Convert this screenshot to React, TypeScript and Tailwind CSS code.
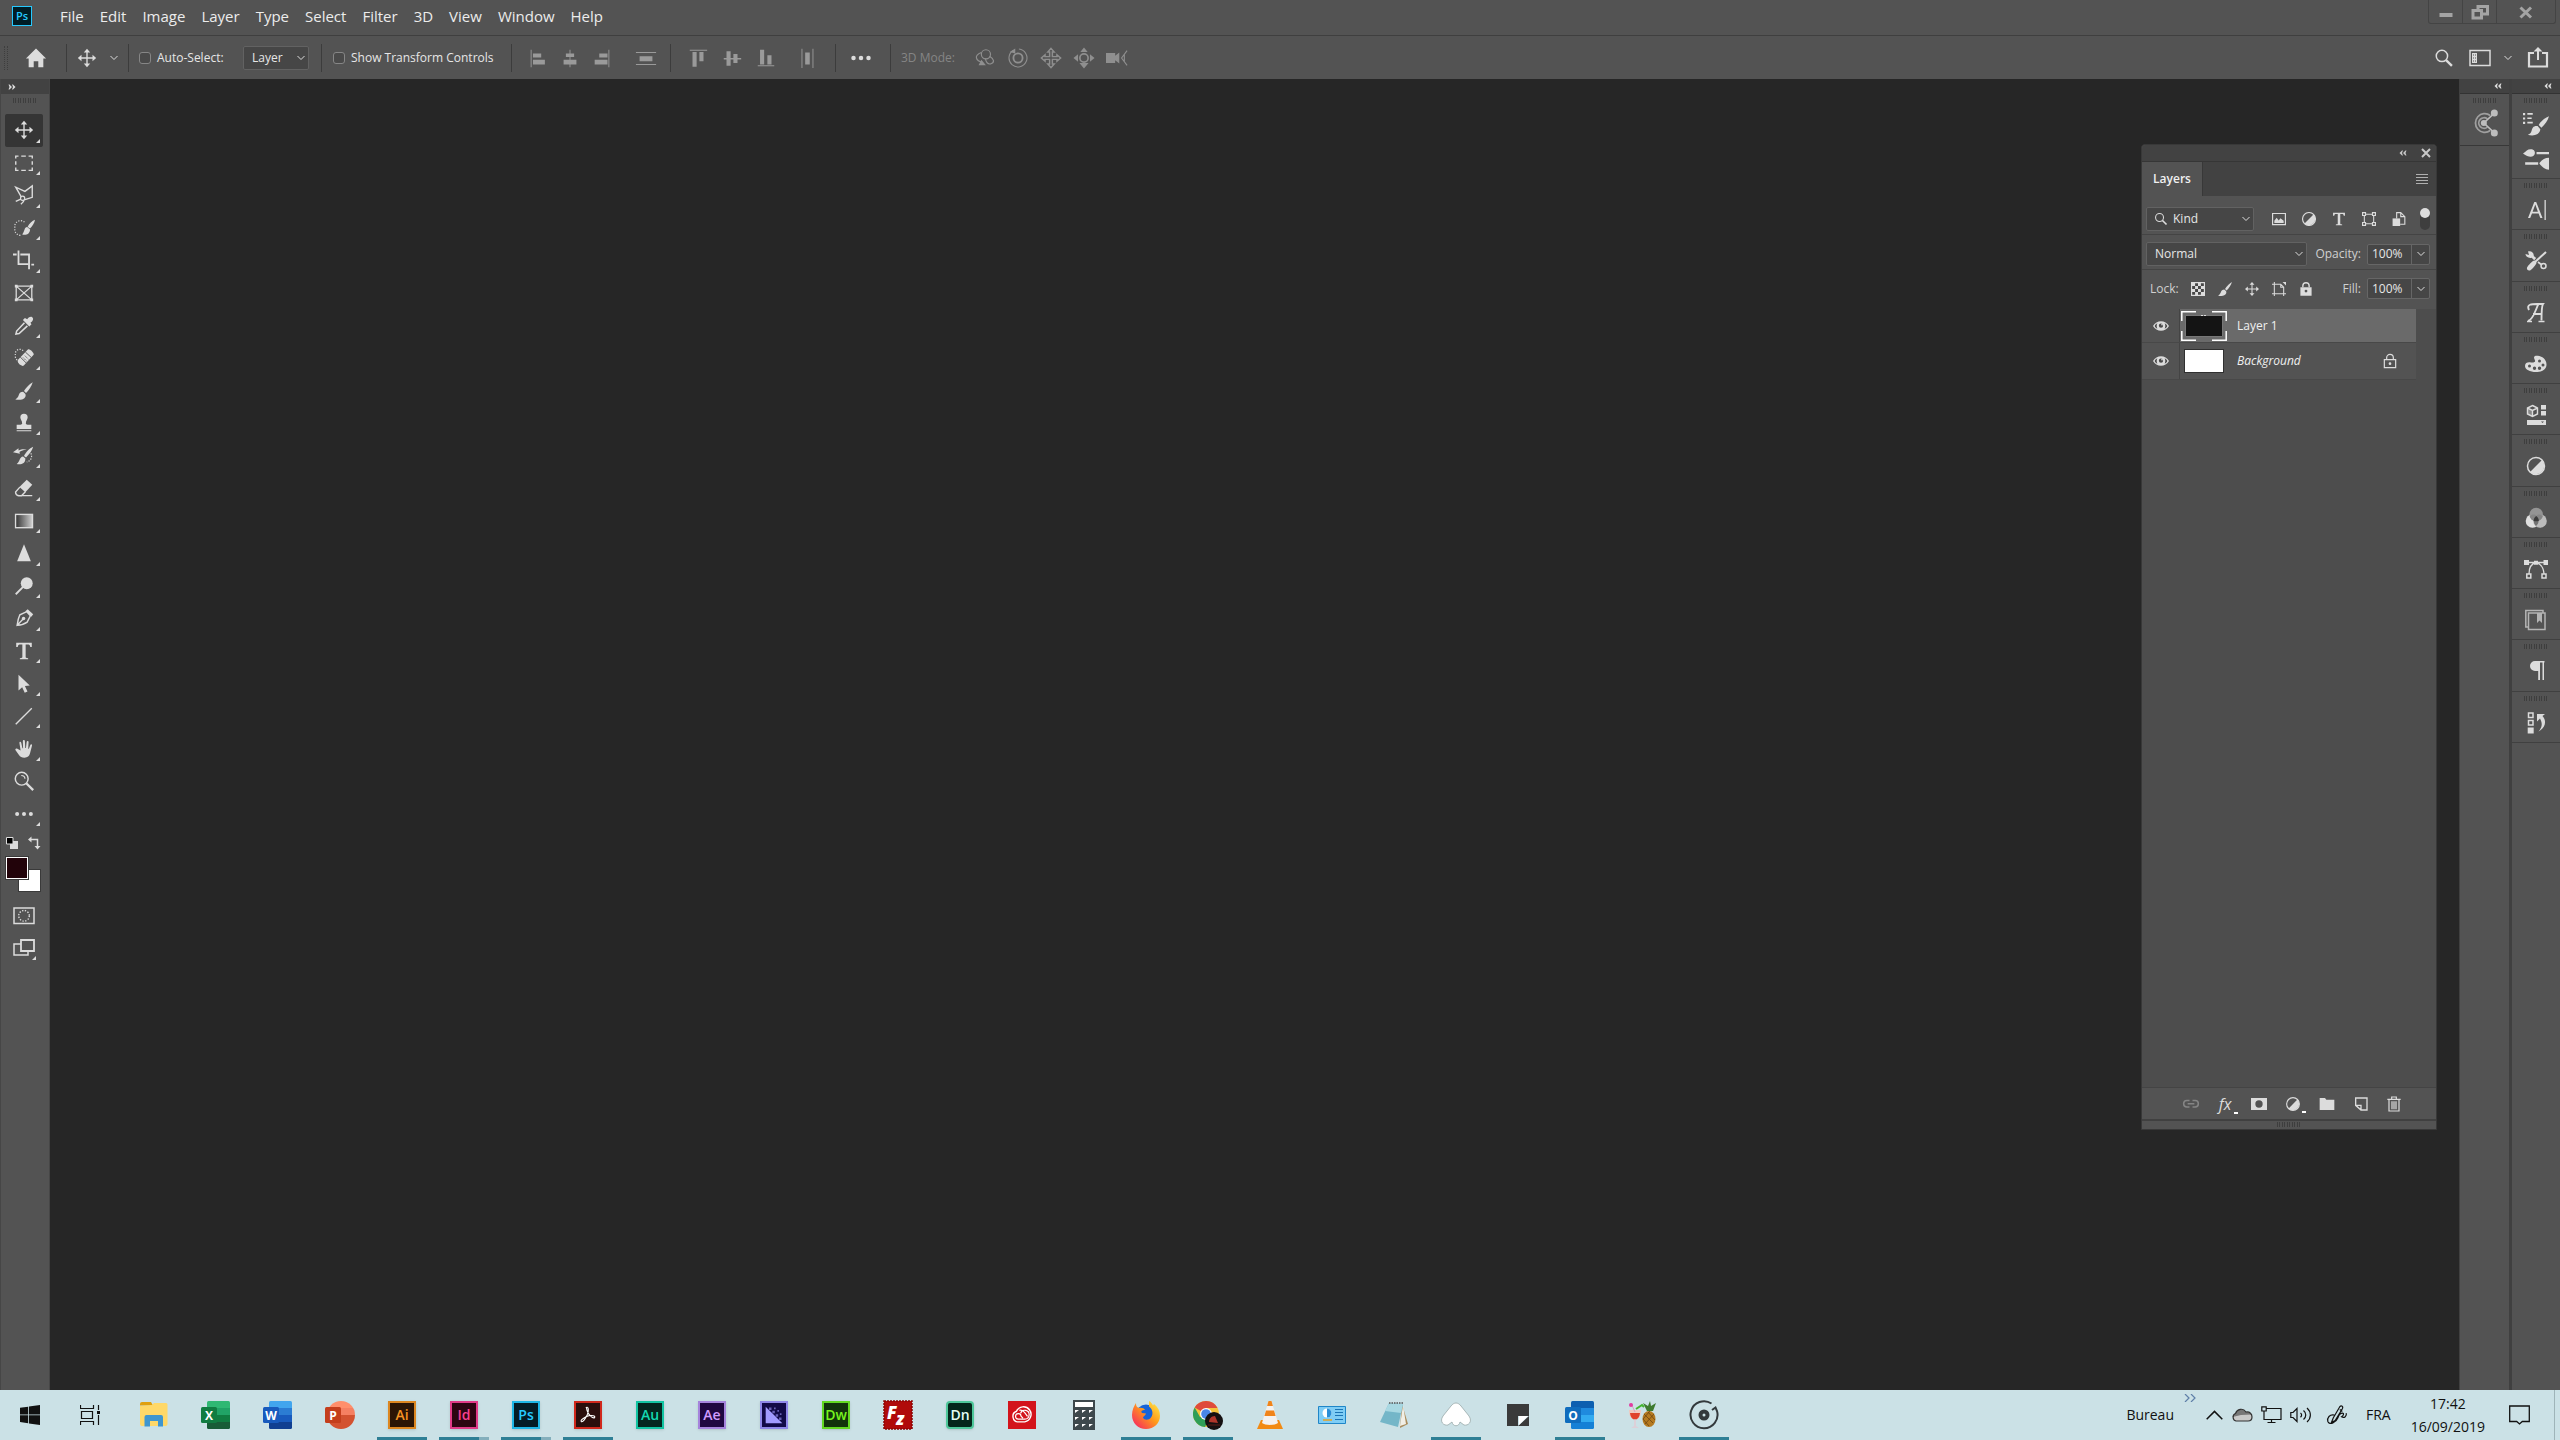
import type { ReactNode } from "react";

interface IconProps {
  children: ReactNode;
  size?: string;
  box?: string;
}

/** Filled + stroked glyph on a 24px grid. */
function Icon({ children, size = "size-6", box = "0 0 24 24" }: IconProps) {
  return (
    <svg viewBox={box} className={`${size} shrink-0`} fill="currentColor" aria-hidden="true">
      {children}
    </svg>
  );
}

/** Outline-only path. */
function Line({ d, w = 1.5 }: { d: string; w?: number }) {
  return <path d={d} fill="none" stroke="currentColor" strokeWidth={w} />;
}

const moveIcon = (
  <>
    <Line d="M12 4v16M4 12h16" />
    <path d="M12 2l3.500 4h-7zM12 22l3.500-4h-7zM2 12l4-3.500v7zM22 12l-4-3.500v7z" />
  </>
);

const brushIcon = (
  <>
    <path d="M21.500 2.500c-3 1.500-7.500 6-9.500 9.500l2.200 2.200c3-3 6.300-7.700 7.300-11.700z" />
    <path d="M11 12.800c-2.500 0-4 1.200-4.600 3.400-.6 2.200-1.900 3.800-3.900 5 4.500 1 9.500.3 11-3 .5-1.300.3-2.600-.2-3.300z" />
  </>
);

const magnifier = (
  <>
    <circle cx="9.500" cy="9.500" r="6.800" fill="none" stroke="currentColor" strokeWidth="1.800" />
    <Line d="M14.500 14.500l7 7" w={2.8} />
  </>
);

const halfCircle = (
  <>
    <circle cx="12" cy="12" r="8.500" fill="none" stroke="currentColor" strokeWidth="1.500" />
    <path d="M18.200 5.800a8.800 8.800 0 0 1-12.400 12.400z" />
  </>
);

const padlock = (
  <>
    <Line d="M7.500 10V8a4.500 4.500 0 0 1 9 0v2" w={2} />
    <path fillRule="evenodd" d="M4 10h16v12H4zM12 13.500a2 2 0 1 0 0 4 2 2 0 0 0 0-4z" />
  </>
);

const typeIcon = (
  <path d="M3.500 3h17v4.500h-1.700C18.500 5.300 18 4.800 15.500 4.800h-1.700v13.700c0 .9.500 1.200 2.700 1.300V21h-9v-1.200c2.200-.1 2.700-.4 2.700-1.300V4.800H8.500C6 4.800 5.500 5.300 5.200 7.500H3.500z" />
);

const tools: { name: string; icon: ReactNode; flyout?: boolean }[] = [
  { name: "Move Tool", icon: moveIcon, flyout: true },
  {
    name: "Rectangular Marquee Tool",
    flyout: true,
    icon: <Line d="M3 7V4.500h3M9 4.500h5M17 4.500h4V7M21 10v4M21 17v3h-4M14 20H9M6 20H3v-3M3 14v-4" />,
  },
  {
    name: "Polygonal Lasso Tool",
    flyout: true,
    icon: (
      <>
        <Line d="M9 14L3 3.500l10 4.500 8-6v12.500L13 17" />
        <circle cx="10.500" cy="15.500" r="2.300" fill="none" stroke="currentColor" strokeWidth="1.300" />
        <Line d="M8.500 16.500L3 19M12 17.500c0 2-1.500 3-3.500 4.500" />
      </>
    ),
  },
  {
    name: "Quick Selection Tool",
    flyout: true,
    icon: (
      <>
        <path d="M12.500 5.500A6.500 6.500 0 0 0 2 9v5c0 4 3.500 6 7 6" fill="none" stroke="currentColor" strokeWidth="1.300" strokeDasharray="1.300 1.600" />
        <path d="M24 3c-3 1-6.500 4.500-8 7.500l2.500 2c2.500-2.300 5-6 5.500-9.500zM15.500 11c-3.500 0-2.500 5-5.500 8 4 .7 8 .3 8.700-5.500z" />
      </>
    ),
  },
  {
    name: "Crop Tool",
    flyout: true,
    icon: (
      <>
        <Line d="M6 1.500v15h11M20 17h3" w={2} />
        <Line d="M0 6h4M8 6h9.500v16" w={2} />
      </>
    ),
  },
  {
    name: "Frame Tool",
    icon: (
      <>
        <Line d="M3.500 4.500h17v15h-17zM3.500 4.500l17 15M20.500 4.500l-17 15" w={1.4} />
        <path d="M2 3h3v3H2zM19 3h3v3h-3zM2 18h3v3H2zM19 18h3v3h-3z" />
      </>
    ),
  },
  {
    name: "Eyedropper Tool",
    flyout: true,
    icon: (
      <>
        <path d="M15.500 4.500c2.500-3.500 5.200-3 6-1.500.9 1.500.5 3.500-2.500 5.500l1.200 1.700-2.400 2.300-7-7 2.200-2.300z" />
        <Line d="M12.500 8.500l-8.500 9-.8 3.300 3.500-.5 9-8.500" w={1.7} />
      </>
    ),
  },
  {
    name: "Spot Healing Brush Tool",
    flyout: true,
    icon: (
      <>
        <path d="M11 4A5 5 0 0 0 2.500 7v3c0 2.500 1.500 4 3 4.500" fill="none" stroke="currentColor" strokeWidth="1.300" strokeDasharray="1.300 1.600" />
        <path d="M16.500 2.500c1.500-1.200 7 4 6 6L12 20c-2.500 2.500-8.500-3.500-6.500-6z" />
        <path d="M13.500 5.500l6.500 6M8 11l6.500 6.500" fill="none" stroke="#535353" />
        <path d="M13 9.500l4 4M11 11.500l4 4" fill="none" stroke="#535353" strokeDasharray="1.500 1" />
      </>
    ),
  },
  { name: "Brush Tool", icon: brushIcon, flyout: true },
  {
    name: "Clone Stamp Tool",
    flyout: true,
    icon: <path d="M12 2a4 4 0 0 1 4 4c0 2-2 3.500-2 6.500 0 1 1 1.500 6 1.500v4.500H4V14c5 0 6-.5 6-1.500C10 9.500 8 8 8 6a4 4 0 0 1 4-4zM4 19.800h16V21H4z" />,
  },
  {
    name: "History Brush Tool",
    flyout: true,
    icon: (
      <>
        <path d="M22 2c-4 1.500-8 6-10 10l2.200 1.600C18 10 21 6 22 2zM11 12.500c-4 .5-3 5-7 8.300 5 .8 9.500-.3 9.500-6z" />
        <path d="M0 8l6-4.500V6c4-2 7-1.500 9-.5-3-.3-5 .3-8 2l.5 2z" />
        <path d="M19.500 9c2 4 0 8.500-4.500 9.500" fill="none" stroke="currentColor" strokeWidth="1.300" strokeDasharray="1.400 1.500" />
      </>
    ),
  },
  {
    name: "Eraser Tool",
    flyout: true,
    icon: (
      <>
        <path d="M15 3l6 5.500-7.500 8L7 11z" />
        <Line d="M7.500 11l-4.700 5.500c0 2 1.500 3.500 3.500 4h3L13.500 16M9 20.300h12" />
      </>
    ),
  },
  {
    name: "Gradient Tool",
    flyout: true,
    icon: (
      <>
        <defs>
          <linearGradient id="tool-gradient">
            <stop offset="0" stopColor="#333" />
            <stop offset="1" stopColor="#d0d0d0" />
          </linearGradient>
        </defs>
        <rect x="2.800" y="4.800" width="18.500" height="14.500" fill="url(#tool-gradient)" stroke="currentColor" strokeWidth="1.500" />
      </>
    ),
  },
  { name: "Sharpen Tool", icon: <path d="M12 2.500L19.500 21h-15z" />, flyout: true },
  {
    name: "Dodge Tool",
    flyout: true,
    icon: (
      <>
        <circle cx="15" cy="9" r="6.500" />
        <Line d="M11 13l-8 8" w={2} />
      </>
    ),
  },
  {
    name: "Pen Tool",
    flyout: true,
    icon: (
      <>
        <Line d="M15 5l-7.500 3.500c-1.500 3-2.500 7.500-3 11.500 4-.3 8-1.300 11-3.500L19 9.500zM5 19.500l6-6.500" w={1.6} />
        <circle cx="11.500" cy="12.500" r="1.900" />
        <path d="M16 2.500l6 5.500-2 2.500-6.500-6z" />
      </>
    ),
  },
  { name: "Horizontal Type Tool", icon: typeIcon, flyout: true },
  { name: "Path Selection Tool", icon: <path d="M6 2v17l4-3.500 2.800 6 3-1.300-2.800-6 5.300-.5z" />, flyout: true },
  { name: "Line Tool", icon: <Line d="M3 21L20.500 3.500" />, flyout: true },
  {
    name: "Hand Tool",
    flyout: true,
    icon: (
      <path d="M8.300 13.500L7 5.500c-.2-1.800 1.700-2 2-.4l1.300 6h.7l-.3-7.600c0-1.700 2.200-1.700 2.300 0l.4 7.500h.7l.8-6.700c.3-1.600 2.200-1.300 2.100.3l-.4 7 .7.200 1.500-4c.6-1.500 2.300-.9 1.900.7l-2.200 8.500c-.8 3-2.500 4.500-6 4.500-3 0-4.600-1-6-3l-3.700-5.200c-.8-1.300.7-2.600 2-1.500z" />
    ),
  },
  {
    name: "Zoom Tool",
    icon: (
      <>
        <circle cx="9.500" cy="9.500" r="7" fill="none" stroke="currentColor" strokeWidth="1.600" />
        <Line d="M9 6c2.500 0 4 1.500 4 3.500" w={1.3} />
        <Line d="M14.500 14.500l7.500 7.500" w={2.5} />
      </>
    ),
  },
  {
    name: "Edit Toolbar",
    flyout: true,
    icon: (
      <>
        <circle cx="4.500" cy="12" r="2.200" />
        <circle cx="12" cy="12" r="2.200" />
        <circle cx="19.500" cy="12" r="2.200" />
      </>
    ),
  },
];

const alignGroups: { name: string; icon: ReactNode; at: string }[][] = [
  [
    { name: "Align left edges", at: "w-8", icon: <path d="M4 3h1v19H4zM6.500 7h9v4.500h-9zM6.500 14h13v5h-13z" /> },
    { name: "Align horizontal centers", at: "w-8", icon: <path d="M11.500 3h1v19h-1zM7.500 7h9v4h-9zM5 14h14v5H5z" /> },
    { name: "Align right edges", at: "w-8", icon: <path d="M19 3h1v19h-1zM9 7h9v4.500H9zM4 14h14v5H4z" /> },
    { name: "Distribute vertically", at: "mr-2 ml-3 w-8", icon: <path d="M1 5.500h22v1H1zM1 18.500h22v1H1zM5 10h14v5.500H5z" /> },
  ],
  [
    { name: "Align top edges", at: "w-[34px]", icon: <path d="M3 3h19v1H3zM6 5.500h4.500v16H6zM13.500 5.500H18v10h-4.500z" /> },
    { name: "Align vertical centers", at: "w-[34px]", icon: <path d="M3 12h19v1.500H3zM6 4.500h4.500v16H6zM13.500 7.500H18v10h-4.500z" /> },
    { name: "Align bottom edges", at: "w-[34px]", icon: <path d="M3 20h18v1H3zM5.500 3H10v16H5.500zM13.500 9H18v10h-4.500z" /> },
    { name: "Distribute horizontally", at: "mr-3 ml-2 w-8", icon: <path d="M6 2h1v21H6zM18 2h1v21h-1zM10 6h5v13h-5z" /> },
  ],
];

const modeIcons: { name: string; icon: ReactNode }[] = [
  {
    name: "Orbit the 3D Camera",
    icon: (
      <>
        <circle cx="13" cy="8" r="5" fill="none" stroke="currentColor" strokeWidth="1.300" />
        <Line d="M8 6c-8 3-7 9 2 11M17 10c5 3 6 7 1 8.500-3 .5-5-2-5.500-6" w={1.3} />
        <path d="M5 20l8 0-5-6z" />
      </>
    ),
  },
  {
    name: "Roll the 3D Camera",
    icon: (
      <>
        <circle cx="12" cy="12" r="5" fill="none" stroke="currentColor" strokeWidth="2" />
        <Line d="M7 3.500a9.800 9.800 0 1 0 6-1.300" w={1.2} />
        <path d="M3 5.500l6-4v5.500z" />
      </>
    ),
  },
  {
    name: "Pan the 3D Camera",
    icon: <Line d="M12 1.500l3.500 4h-2v5h5v-2l4 3.500-4 3.500v-2h-5v5h2l-3.500 4-3.500-4h2v-5h-5v2L1.500 12l4-3.500v2h5v-5h-2z" w={1.6} />,
  },
  {
    name: "Slide the 3D Camera",
    icon: (
      <>
        <circle cx="12" cy="12" r="4.500" fill="none" stroke="currentColor" strokeWidth="1.800" />
        <path d="M12 .5l4 5H8zM12 23.500l5-6H7zM.5 12l5-4v8zM23.500 12l-5-4v8z" />
      </>
    ),
  },
  {
    name: "Zoom the 3D Camera",
    icon: (
      <>
        <path d="M0 6.500h10v3L14.500 6v12L10 14.500v3H0z" />
        <Line d="M23 4l-6 8 6 8M20 8.500v7" w={1.2} />
      </>
    ),
  },
];

const dockGroups: { name: string; icon: ReactNode }[] = [
  {
    name: "Character",
    icon: (
      <>
        <path d="M4 20L10.300 4h1.900L18.500 20h-2.200l-1.700-4.500H8L6.200 20zM8.600 13.700h5.300L11.300 6.500z" />
        <path d="M20.500 2h1.300v20h-1.300z" />
      </>
    ),
  },
  {
    name: "Tool Presets",
    icon: (
      <>
        <path d="M4 2.500c3-1 6 1 5.800 4.500l2.400 2-2 2.200-2.500-2.500C4.500 9.500 1.500 7.500 1.500 5l3.500 1z" />
        <Line d="M22 3L11 13" w={2} />
        <path d="M10.500 11.500l2 2c0 2-5 7.500-6.500 8-2 .5-3.500-1-3-3 1-2 5.500-7 7.500-7z" />
        <Line d="M14 13l4 3" w={1.7} />
        <circle cx="19.500" cy="17" r="2.500" fill="none" stroke="currentColor" strokeWidth="1.500" />
      </>
    ),
  },
  {
    name: "Glyphs",
    icon: (
      <>
        <Line d="M5 9C2 3 8 3 13 3h6c-1.500 2-1.500 9-1.500 16.500M14.500 3C12 7 9.500 19 4 20M9 13h8.500" w={1.9} />
        <Line d="M3 20.500h5M14.500 20.500h6" />
      </>
    ),
  },
  {
    name: "Color",
    icon: (
      <path
        fillRule="evenodd"
        d="M11 4c3.500-1 11.500 1.500 11.500 8.500C22.500 18 17 20 12 20 6 20 1 17.500 1 14c0-3.500 3-4 6-3.500 3 .3 4.500-.5 4-2-.4-1.500-2-3.500 0-4.500zM15.500 7.500a1.500 1.500 0 1 0 0 3 1.500 1.500 0 0 0 0-3zM19 11.500a1.500 1.500 0 1 0 0 3 1.500 1.500 0 0 0 0-3zM15.500 14.500a1.700 1.700 0 1 0 0 3.400 1.700 1.700 0 0 0 0-3.400zM10.500 14.500a1.700 1.700 0 1 0 0 3.400 1.700 1.700 0 0 0 0-3.400zM5.500 12.500a1.500 1.500 0 1 0 0 3 1.500 1.500 0 0 0 0-3z"
      />
    ),
  },
  {
    name: "Libraries",
    icon: (
      <>
        <Line d="M8.500 2.500L13.500 5v6l-5 2.500-5-2.500V5zM3.500 5l5 2.500 5-2.500M8.500 7.500v6" w={1.4} />
        <path opacity=".4" d="M3.500 5l5 2.500v6l-5-2.500z" />
        <path d="M17 2h5v4.500h-5zM17 8h5v4.500h-5z" />
        <path fillRule="evenodd" d="M3 17h19v5H3zM17 18.500l1.500 1.500L20 18.500z" />
      </>
    ),
  },
  { name: "Adjustments", icon: halfCircle },
  {
    name: "Channels",
    icon: (
      <>
        <circle cx="8.500" cy="15" r="6.800" fill="#e0e0e0" />
        <circle cx="16" cy="15" r="6.800" fill="#bcbcbc" />
        <circle cx="12.200" cy="8.500" r="6.800" fill="#949494" />
        <path d="M5.800 10.500c2-2.500 5-2.500 6.500-.5 1.500-2 4.500-2 6.400.5-1 3-3.500 4.500-6.400 4.800-3-.3-5.500-1.800-6.500-4.800z" fill="#858585" />
        <path d="M12.200 10c3 2 3.500 7-.2 10-3.300-3-2.800-8 .2-10z" fill="#727272" />
        <path d="M12.200 10c1.500 1 2.500 3 2.700 4.800-1.700.7-3.700.7-5.400 0 .2-1.800 1.200-3.800 2.700-4.800z" fill="#3c3c3c" />
      </>
    ),
  },
  {
    name: "Paths",
    icon: (
      <>
        <Line d="M1 5.500h22M5 17c0-7 3-10.500 7-11.500 4 1 7.500 4.500 8 11.500" w={1.3} />
        <path d="M0 3h5v5H0zM19.500 3h5v5h-5zM10 3.800h4v4h-4z" />
        <Line d="M2.800 17h4v4h-4zM18 17h4v4h-4z" />
      </>
    ),
  },
  {
    name: "Character Styles",
    icon: (
      <g className="text-[#b4b4b4]">
        <Line d="M4.500 19H1.800V2.500H19V5" />
        <Line d="M4.500 5H21v16.500H4.500z" />
        <path d="M13 5h5v10l-2.500-2.500L13 15z" />
      </g>
    ),
  },
  { name: "Paragraph", icon: <path d="M11 2h9.500v1.500H20V21h-1.500V3.500H16V21h-1.800v-9H11a5 5 0 0 1 0-10z" /> },
  {
    name: "History",
    icon: (
      <>
        <Line d="M4.500 2h4.500v4.500H4.500zM4.500 9.500h4.500v4.500H4.500z" />
        <path d="M3.700 16.500h6v6h-6zM13 3h8l-2.500 2c4.500 5 3 11.500-4 15.500 4-4.500 4-8.500 1.500-13L13 10.500z" />
      </>
    ),
  },
];

function Chevron() {
  return (
    <svg viewBox="0 0 8 6" className="h-[6px] w-2 shrink-0" fill="none" stroke="currentColor" aria-hidden="true">
      <path d="M.5 1l3.500 3.500L7.500 1" />
    </svg>
  );
}

function DoubleArrow({ right }: { right?: boolean }) {
  return (
    <svg viewBox="0 0 8 6" className="h-[6px] w-2 shrink-0" fill="currentColor" aria-hidden="true">
      <path d={right ? "M.5.5h1L4 3 1.500 5.500h-1L1.500 3zM4 .5h1L7.500 3 5 5.500H4L5 3z" : "M4 .5H3L.5 3 3 5.500h1L3 3zM7.500.5h-1L4 3l2.500 2.500h1L6.500 3z"} />
    </svg>
  );
}

function Grip() {
  return (
    <svg viewBox="0 0 24 5" className="h-[5px] w-6 shrink-0" stroke="#3e3e3e" aria-hidden="true">
      <path d="M.5 0v5M2.500 0v5M5.500 0v5M7.500 0v5M10.500 0v5M12.500 0v5M15.500 0v5M17.500 0v5M20.500 0v5M22.500 0v5" />
    </svg>
  );
}

function Separator() {
  return <div className="h-7 w-px shrink-0 bg-[#3c3c3c]" />;
}

interface PickerProps {
  label: string;
  value: string;
  width: string;
  pad?: string;
  children?: ReactNode;
}

function Picker({ label, value, width, pad = "pl-2", children }: PickerProps) {
  return (
    <div className={`relative ${width} shrink-0`}>
      {children && <span className="pointer-events-none absolute inset-y-0 left-2 flex items-center">{children}</span>}
      <select
        aria-label={label}
        className={`block h-6 w-full appearance-none rounded-[2px] border border-[#626262] bg-[#464646] text-[12px] leading-4 text-[#e6e6e6] ${pad}`}
      >
        <option>{value}</option>
      </select>
      <span className="pointer-events-none absolute inset-y-0 right-1 flex items-center">
        <Chevron />
      </span>
    </div>
  );
}

function MenuBar() {
  const menus = ["File", "Edit", "Image", "Layer", "Type", "Select", "Filter", "3D", "View", "Window", "Help"];
  return (
    <header className="flex h-9 items-start justify-between border-b border-[#3f3f3f] bg-[#535353]">
      <div className="flex items-center pl-3">
        <span className="mt-1.5 mr-7 flex h-5 w-5 items-center justify-center border border-[#26c9ff] bg-[#001d26] text-[11px] font-semibold text-[#26c9ff]">
          Ps
        </span>
        <nav className="flex gap-4 pt-1.5">
          {menus.map((menu) => (
            <button key={menu} type="button" className="text-[15px] leading-5 text-[#ececec]">
              {menu}
            </button>
          ))}
        </nav>
      </div>
      <div className="mr-1 flex h-6 rounded-b-[3px] border border-t-0 border-[#444] text-[#a4a4a4]">
        <button type="button" aria-label="Minimize" className="flex w-[34px] items-center justify-center border-r border-[#444]">
          <Icon size="size-4" box="0 0 16 16"><path d="M1.500 9h13v4h-13z" /></Icon>
        </button>
        <button type="button" aria-label="Restore" className="flex w-[34px] items-center justify-center border-r border-[#444]">
          <Icon size="size-[18px]" box="0 0 18 18">
            <Line d="M7 7V3.500h9.500V11h-5" w={3} />
            <Line d="M2 7.500h8.500V15H2z" w={3} />
          </Icon>
        </button>
        <button type="button" aria-label="Close" className="flex w-[58px] items-center justify-center">
          <Icon size="size-4" box="0 0 16 16"><Line d="M2.500 3.500l10.500 10M13 3.500l-10.500 10" w={3} /></Icon>
        </button>
      </div>
    </header>
  );
}

function CheckOption({ label }: { label: string }) {
  return (
    <label className="flex items-center gap-1.5 text-[12px] leading-4 text-[#e6e6e6]">
      <input type="checkbox" className="h-3 w-3 appearance-none rounded-[3px] border border-[#868686] bg-[#4a4a4a]" />
      {label}
    </label>
  );
}

function OptionsBar() {
  return (
    <div className="flex h-[43px] items-center bg-[#535353] text-[#dcdcdc]">
      <div className="ml-1 h-6 w-1 shrink-0 border-x border-dotted border-[#3e3e3e]" />
      <button type="button" aria-label="Home" className="flex w-[58px] justify-center pr-0.5">
        <Icon size="size-[22px]"><path d="M12 1.500l11 11h-3V22h-5.500v-6.500h-5V22H4v-9.500H1z" /></Icon>
      </button>
      <Separator />
      <button type="button" aria-label="Current tool" className="flex w-[61px] items-center justify-center gap-3 pr-0.5">
        <Icon size="size-[22px]">{moveIcon}</Icon>
        <Chevron />
      </button>
      <Separator />
      <div className="flex w-[192px] items-center justify-between pr-3 pl-2.5">
        <CheckOption label="Auto-Select:" />
        <Picker label="Auto-select target" value="Layer" width="w-[66px]" />
      </div>
      <Separator />
      <div className="flex w-[189px] pl-[11px] whitespace-nowrap">
        <CheckOption label="Show Transform Controls" />
      </div>
      {alignGroups.map((group, i) => (
        <div key={i} className="flex items-center text-[#9a9a9a]">
          <Separator />
          <div className="flex pl-2.5">
            {group.map((item) => (
              <button key={item.name} type="button" aria-label={item.name} className={`flex justify-center ${item.at}`}>
                <Icon size="size-[22px]">{item.icon}</Icon>
              </button>
            ))}
          </div>
        </div>
      ))}
      <Separator />
      <button type="button" aria-label="Align and distribute" className="flex w-[54px] justify-center pr-1">
        <Icon size="size-5">
          <circle cx="3" cy="12" r="2.700" />
          <circle cx="12" cy="12" r="2.700" />
          <circle cx="21" cy="12" r="2.700" />
        </Icon>
      </button>
      <Separator />
      <div className="flex items-center pl-2.5 text-[#8f8f8f]">
        <span className="w-[67px] text-[12px] leading-4 whitespace-nowrap text-[#858585]">3D Mode:</span>
        {modeIcons.map((mode) => (
          <button key={mode.name} type="button" aria-label={mode.name} className="flex w-[33px] justify-center">
            <Icon size="size-[22px]">{mode.icon}</Icon>
          </button>
        ))}
      </div>
      <div className="ml-auto flex items-center pr-2.5">
        <button type="button" aria-label="Search" className="mr-3.5">
          <Icon size="size-5">{magnifier}</Icon>
        </button>
        <button type="button" aria-label="Workspace" className="flex items-center gap-3">
          <Icon>
            <Line d="M2 4.500h20v15H2z" />
            <path d="M4 7h5v10H4z" />
            <path d="M5 8.500h1v1H5zM5 11.500h1v1H5zM5 14.500h1v1H5zM7 8.500h1v1H7zM7 11.500h1v1H7zM7 14.500h1v1H7z" fill="#535353" />
          </Icon>
          <Chevron />
        </button>
        <button type="button" aria-label="Share" className="ml-3.5">
          <Icon>
            <Line d="M8 7H3v13.500h18V7h-5" w={2.2} />
            <path d="M12 1l4.500 4.500H13V14h-2V5.500H7.500z" />
          </Icon>
        </button>
      </div>
    </div>
  );
}

function Toolbar() {
  return (
    <aside className="w-[50px] shrink-0 border-x border-[#464646] bg-[#535353] text-[#dcdcdc]">
      <div className="flex h-[15px] items-center bg-[#424242] pl-[7px]">
        <DoubleArrow right />
      </div>
      <div className="flex h-5 items-start pt-1 pl-3">
        <Grip />
      </div>
      <div className="flex h-[716px] flex-col pr-0.5">
        {tools.map((tool, i) => (
          <button
            key={tool.name}
            type="button"
            aria-label={tool.name}
            className={`relative mx-1 flex flex-1 items-center justify-center ${i === 0 ? "rounded-[2px] bg-[#353535]" : ""}`}
          >
            <Icon size="size-[22px]">{tool.icon}</Icon>
            {tool.flyout && (
              <svg viewBox="0 0 4 4" className="absolute right-[3px] bottom-1 size-1" fill="currentColor" aria-hidden="true">
                <path d="M4 0v4H0z" />
              </svg>
            )}
          </button>
        ))}
      </div>
      <div className="flex items-center justify-between pt-1.5 pr-2 pl-1">
        <button type="button" aria-label="Default colors">
          <Icon size="size-3.5" box="0 0 14 14">
            <path d="M5 5h8v8H5z" />
            <path d="M1.500 1.500H8V8H1.500z" fill="#000" stroke="currentColor" />
          </Icon>
        </button>
        <button type="button" aria-label="Switch colors">
          <Icon size="size-3.5" box="0 0 14 14">
            <Line d="M4 3.500h6.500V11" />
            <path d="M1 3.500L4.500.5v6zM10.500 13.500l-3-3.500h6z" />
          </Icon>
        </button>
      </div>
      <div className="relative mt-[7px] ml-[5px] h-[35px] w-[35px]">
        <button type="button" aria-label="Background color" className="absolute right-0 bottom-0 size-[23px] border border-[#3a3a3a] bg-white" />
        <button
          type="button"
          aria-label="Foreground color"
          className="absolute top-0 left-0 size-[22px] border border-white bg-[#22030a] outline outline-[#3a3a3a]"
        />
      </div>
      <div className="flex flex-col items-center gap-2 pt-3 pr-0.5">
        <button type="button" aria-label="Quick mask">
          <Icon>
            <Line d="M2 4h20v15.500H2z" />
            <circle cx="12" cy="11.800" r="5.300" fill="none" stroke="currentColor" strokeWidth="1.400" strokeDasharray="1.300 1.500" />
          </Icon>
        </button>
        <button type="button" aria-label="Screen mode">
          <Icon>
            <Line d="M9 8H2v11h14v-3" />
            <Line d="M9 4h13v11H9z" w={1.8} />
            <path d="M24 20v4h-4z" />
          </Icon>
        </button>
      </div>
    </aside>
  );
}

function PercentField({ id, label }: { id: string; label: string }) {
  return (
    <div className="flex items-center gap-1.5">
      <label htmlFor={id} className="text-[12px] leading-4 text-[#d0d0d0]">
        {label}
      </label>
      <div className="flex h-[21px] rounded-[2px] border border-[#666] bg-[#464646]">
        <input id={id} defaultValue="100%" className="w-[43px] pl-1 text-[12px] leading-4 text-[#e6e6e6]" />
        <button type="button" aria-label={`${label} slider`} className="flex w-[18px] items-center justify-center border-l border-[#666]">
          <Chevron />
        </button>
      </div>
    </div>
  );
}

const filterIcons: { name: string; icon: ReactNode }[] = [
  {
    name: "Pixel layers",
    icon: (
      <>
        <Line d="M1 2.500h22v19H1z" w={2} />
        <path d="M4 19v-4l4-5 3.500 4.500 3-4L20 15v4z" />
      </>
    ),
  },
  { name: "Adjustment layers", icon: <g transform="translate(-3.600 -3.600) scale(1.300)">{halfCircle}</g> },
  { name: "Type layers", icon: <g transform="translate(-2.400 -2.400) scale(1.200)">{typeIcon}</g> },
  {
    name: "Shape layers",
    icon: (
      <>
        <Line d="M4 4h16v16H4z" w={1.8} />
        <path d="M0 0h7v7H0zM17 0h7v7h-7zM0 17h7v7H0zM17 17h7v7h-7z" />
        <path d="M2 2h3v3H2zM19 2h3v3h-3zM2 19h3v3H2zM19 19h3v3h-3z" fill="#535353" />
      </>
    ),
  },
  {
    name: "Smart objects",
    icon: (
      <>
        <Line d="M8 11V1h7l7 7v13h-8M15 1v7h7" w={1.9} />
        <path d="M1 11h13v13H1z" />
      </>
    ),
  },
];

const lockIcons: { name: string; icon: ReactNode }[] = [
  {
    name: "Lock transparent pixels",
    icon: (
      <>
        <path d="M0 0h24v24H0z" />
        <path d="M7 2h5v5H7zM17 2h5v5h-5zM2 7h5v5H2zM12 7h5v5h-5zM7 12h5v5H7zM17 12h5v5h-5zM2 17h5v5H2zM12 17h5v5h-5z" fill="#464646" />
      </>
    ),
  },
  { name: "Lock image pixels", icon: <g transform="translate(-3 -3) scale(1.250)">{brushIcon}</g> },
  { name: "Lock position", icon: <g transform="translate(-2.400 -2.400) scale(1.200)">{moveIcon}</g> },
  {
    name: "Prevent auto-nesting",
    icon: (
      <>
        <Line d="M4 0v24M0 4h15l5 5v15M0 20h24M15 4v5h5" w={1.8} />
        <path d="M18 0h6v6z" />
      </>
    ),
  },
  { name: "Lock all", icon: <g transform="translate(-2.400 -3) scale(1.200)">{padlock}</g> },
];

function Eye({ name }: { name: string }) {
  return (
    <button type="button" aria-label={`Toggle visibility of ${name}`} className="flex w-[38px] shrink-0 items-center justify-center border-r border-[#444]">
      <Icon size="size-4">
        <path d="M0 12C5 2.500 19 2.500 24 12 19 21.500 5 21.500 0 12z" />
        <path d="M2.500 12c1-2 2.500-3.300 4-4-1.300 2.500-1.300 5.500 0 8-1.500-.7-3-2-4-4zM21.500 12c-1-2-2.500-3.300-4-4 1.300 2.500 1.300 5.500 0 8 1.500-.7 3-2 4-4z" fill="#484848" />
        <circle cx="12" cy="11.500" r="3.200" fill="#484848" />
        <circle cx="13.500" cy="10" r="1.200" />
      </Icon>
    </button>
  );
}

function LayersPanel() {
  return (
    <section
      aria-label="Layers"
      className="absolute top-[65px] right-[22px] bottom-[260px] flex w-[296px] flex-col rounded-t-[4px] border border-[#383838] bg-[#535353] text-[#dcdcdc]"
    >
      <div className="flex h-4 items-center justify-end gap-3.5 rounded-t-[4px] bg-[#424242] pr-[5px] text-[#c8c8c8]">
        <DoubleArrow />
        <button type="button" aria-label="Close panel">
          <Icon size="size-2.5" box="0 0 10 10"><Line d="M1 1l8 8M9 1L1 9" w={2} /></Icon>
        </button>
      </div>
      <div className="flex h-[35px] justify-between border-t border-[#363636] bg-[#424242]">
        <h2 className="flex w-[61px] items-center justify-center border-r border-[#383838] bg-[#535353] text-[12px] leading-4 font-semibold text-[#f0f0f0]">
          Layers
        </h2>
        <button type="button" aria-label="Panel menu" className="flex items-center pr-2 text-[#b0b0b0]">
          <Icon size="h-2.5 w-3" box="0 0 12 10"><path d="M0 0h12v1H0zM0 3h12v1H0zM0 6h12v1H0zM0 9h12v1H0z" /></Icon>
        </button>
      </div>
      <div className="flex h-[39px] items-center border-b border-[#444] pt-2 pr-1.5 pl-1">
        <Picker label="Filter type" value="Kind" width="w-[108px]" pad="pl-[26px]">
          <Icon size="size-3.5">{magnifier}</Icon>
        </Picker>
        <div className="ml-auto flex">
          {filterIcons.map((f) => (
            <button key={f.name} type="button" aria-label={f.name} className="flex w-[30px] justify-center">
              <Icon size="size-3.5">{f.icon}</Icon>
            </button>
          ))}
        </div>
        <button type="button" aria-label="Toggle filtering" className="ml-1.5 flex h-[22px] w-2.5 items-start rounded-full bg-[#3e3e3e]">
          <span className="size-2.5 rounded-full bg-[#dcdcdc]" />
        </button>
      </div>
      <div className="flex h-[35px] items-center justify-between border-b border-[#444] pt-1 pr-1.5 pl-1">
        <Picker label="Blend mode" value="Normal" width="w-[161px]" />
        <PercentField id="opacity" label="Opacity:" />
      </div>
      <div className="flex h-[39px] items-center pr-1.5 pb-0.5 pl-2">
        <span className="mr-1.5 text-[12px] leading-4 text-[#d0d0d0]">Lock:</span>
        {lockIcons.map((l) => (
          <button key={l.name} type="button" aria-label={l.name} className="flex w-[27px] justify-center">
            <Icon size="size-3.5">{l.icon}</Icon>
          </button>
        ))}
        <div className="ml-auto">
          <PercentField id="fill" label="Fill:" />
        </div>
      </div>
      <div className="flex flex-1 flex-col bg-[#4d4d4d] pr-5">
        <div className="flex h-[34px] border-b border-[#484848] bg-[#535353]">
          <Eye name="Layer 1" />
          <div className="flex flex-1 items-center gap-2.5 bg-[#6a6a6a] pl-px">
            <svg viewBox="0 0 46 30" className="h-[30px] w-[46px] shrink-0" aria-hidden="true">
              <path d="M4.500 4.500h37v21h-37z" fill="#141414" stroke="#777" />
              <path d="M20 4.500h6" stroke="#ddd" strokeDasharray="2 1" />
              <path d="M.8 10V.8H15M31 .8h14.200V10M45.200 20v9.200H31M15 29.200H.8V20" fill="none" stroke="#fff" strokeWidth="1.500" />
            </svg>
            <span className="text-[12px] leading-4 text-[#f0f0f0]">Layer 1</span>
          </div>
        </div>
        <div className="flex h-[37px] border-b border-[#484848] bg-[#535353]">
          <Eye name="Background" />
          <div className="flex flex-1 items-center pl-1 text-[12px] leading-4">
            <span className="mr-[13px] h-6 w-10 border border-[#303030] bg-white" />
            <span className="text-[#f0f0f0] italic">Background</span>
            <span className="mr-[18px] ml-auto">
              <Icon size="size-4">
                <Line d="M7 10V7a5 5 0 0 1 10 0v3M3.500 10h17v12h-17z" w={1.8} />
                <circle cx="12" cy="16" r="2" />
              </Icon>
            </span>
          </div>
        </div>
      </div>
      <div className="flex h-8 items-center border-t border-[#444] pl-8">
        <button type="button" aria-label="Link layers" className="flex w-[34px] justify-center text-[#858585]">
          <Icon size="size-[18px]">
            <Line d="M10 16H6.500a4.300 4.300 0 0 1 0-8.600H10M14 7.400h3.500a4.300 4.300 0 0 1 0 8.600H14M7.500 11.700h9" w={2} />
          </Icon>
        </button>
        <button type="button" aria-label="Layer style" className="relative flex w-[34px] justify-center text-[16px] leading-5 italic">
          fx
          <span className="absolute right-1 bottom-0 h-[2px] w-1 bg-white" />
        </button>
        <button type="button" aria-label="Add mask" className="flex w-[34px] justify-center">
          <Icon size="size-4"><path fillRule="evenodd" d="M0 3h24v18H0zM12 6.500a5.500 5.500 0 1 0 0 11 5.500 5.500 0 0 0 0-11z" /></Icon>
        </button>
        <button type="button" aria-label="New adjustment layer" className="relative flex w-[34px] justify-center">
          <Icon size="size-[18px]">{halfCircle}</Icon>
          <span className="absolute right-1 bottom-0 h-[2px] w-1 bg-white" />
        </button>
        <button type="button" aria-label="New group" className="flex w-[34px] justify-center">
          <Icon size="size-4"><path d="M1 3h8l2 2.500h12V21H1z" /></Icon>
        </button>
        <button type="button" aria-label="New layer" className="flex w-[34px] justify-center">
          <Icon size="size-4"><Line d="M4 14V3h17v18h-9zM4 14h8v7" w={2} /></Icon>
        </button>
        <button type="button" aria-label="Delete layer" className="flex w-[34px] justify-center pr-0.5">
          <Icon size="size-4"><Line d="M2 5h20M8.500 4V1.500h7V4M4.500 6v16.500h15V6M9 8v12M12 8v12M15 8v12" w={1.8} /></Icon>
        </button>
      </div>
      <div className="flex h-2.5 justify-center border-t-2 border-[#404040] pt-px">
        <Grip />
      </div>
    </section>
  );
}

function Dock() {
  return (
    <>
      <aside className="flex w-[51px] shrink-0 flex-col border-x border-[#404040] bg-[#535353] text-[#bdbdbd]">
        <div className="flex h-[15px] items-center justify-end border-b border-[#333] bg-[#424242] pr-[7px] text-[#dcdcdc]">
          <DoubleArrow />
        </div>
        <div className="flex h-[52px] flex-col items-center gap-1.5 border-b border-[#383838] pt-1">
          <Grip />
          <button type="button" aria-label="Learn">
            <Icon size="size-7">
              <path d="M16.500 5.500a8 8 0 1 0 0 13" fill="none" stroke="#a0a0a0" strokeWidth="1.500" />
              <path d="M14 8.500a4.500 4.500 0 1 0 0 7" fill="none" stroke="#a0a0a0" strokeWidth="1.500" />
              <Line d="M11 12l9-8.500M11 12l9 8.500" w={1.4} />
              <circle cx="11" cy="12" r="2.600" />
              <circle cx="20" cy="3.500" r="3" />
              <circle cx="20" cy="20.500" r="3" />
            </Icon>
          </button>
        </div>
      </aside>
      <aside className="flex w-[50px] shrink-0 flex-col border-l-2 border-[#404040] bg-[#535353] text-[#dcdcdc]">
        <div className="flex h-[15px] items-center justify-end border-b border-[#333] bg-[#424242] pr-2">
          <DoubleArrow />
        </div>
        <div className="flex h-[85px] flex-col items-center gap-[9px] border-b border-[#404040] pt-1">
          <Grip />
          <button type="button" aria-label="Brushes">
            <Icon size="size-[26px]">
              <path d="M0 1h2v2H0zM0 5h2v2H0zM0 9h2v2H0zM4 1h5v1.500H4zM4 5h4v1.500H4zM4 9h5v1.500H4z" />
              <path d="M24 4c-4 1.500-8 5-9.500 8l2.500 2.500c3-2.500 6-6.500 7-10.500zM13.500 13c-4-.5-5 2-5.500 4s-1.500 3.200-3.500 4c4.500 1.500 11 .5 11.500-5z" />
            </Icon>
          </button>
          <button type="button" aria-label="Brush Settings">
            <Icon size="size-[26px]">
              <path d="M0 6c3-2 4-4 7-4s4 1.500 4 3.500S9 9 7 9 3 8 0 6zM12.500 4.500H24v2.300H12.500zM2 14h12v2.300H2zM15 15c2-2.500 5-5 9-5v11c-4 0-7-3-9-6z" />
            </Icon>
          </button>
        </div>
        <div className="flex h-[564px] flex-col">
          {dockGroups.map((g) => (
            <div key={g.name} className="flex flex-1 flex-col items-center gap-2.5 border-b border-[#404040] pt-1">
              <Grip />
              <button type="button" aria-label={g.name}>
                <Icon>{g.icon}</Icon>
              </button>
            </div>
          ))}
        </div>
      </aside>
    </>
  );
}

/** Square Adobe-style tile with a two-letter mark. */
function Tile({ mark, tone }: { mark: string; tone: string }) {
  return (
    <span className={`flex size-7 items-center justify-center border-2 text-[14px] leading-5 font-semibold shadow-sm ${tone}`}>
      {mark}
    </span>
  );
}

interface OfficeProps {
  mark: string;
  shades: [string, string, string, string];
  badge: string;
  round?: boolean;
}

function Office({ mark, shades, badge, round }: OfficeProps) {
  const clip = `office-${mark}`;
  return (
    <svg viewBox="0 0 30 28" className="h-7 w-[30px]" aria-hidden="true">
      <clipPath id={clip}>{round ? <circle cx="16" cy="14" r="14" /> : <rect x="6" width="23" height="28" rx="1.500" />}</clipPath>
      <g clipPath={`url(#${clip})`}>
        <path d="M0 0h30v7H0z" fill={shades[0]} />
        <path d="M0 7h30v7H0z" fill={shades[1]} />
        <path d="M0 14h30v7H0z" fill={shades[2]} />
        <path d="M0 21h30v7H0z" fill={shades[3]} />
      </g>
      <rect y="6" width="16" height="16" rx="1.500" fill={badge} />
      <text x="8" y="18.500" textAnchor="middle" fontSize="12" fontWeight="700" fill="#fff">
        {mark}
      </text>
    </svg>
  );
}

const apps: { name: string; running?: "one" | "many"; icon: ReactNode }[] = [
  {
    name: "File Explorer",
    icon: (
      <svg viewBox="0 0 28 26" className="h-[26px] w-7" aria-hidden="true">
        <path d="M0 2a2 2 0 0 1 2-2h9l2 3.500H0z" fill="#e0a010" />
        <path d="M0 4l12-1 2-2h12a1.500 1.500 0 0 1 1.500 1.500V22a2 2 0 0 1-2 2H2a2 2 0 0 1-2-2z" fill="#ffd868" />
        <path d="M4.500 24.500V15a2 2 0 0 1 2-2h14.500a2 2 0 0 1 2 2v9.500h-5V19h-8v5.500z" fill="#3f96cf" />
      </svg>
    ),
  },
  { name: "Excel", icon: <Office mark="X" shades={["#2fb873", "#21a366", "#107c41", "#185c37"]} badge="#107c41" /> },
  { name: "Word", icon: <Office mark="W" shades={["#41a5ee", "#2b7cd3", "#185abd", "#103f91"]} badge="#185abd" /> },
  { name: "PowerPoint", icon: <Office mark="P" shades={["#ff8f6b", "#f58062", "#d35230", "#d35230"]} badge="#c43e1c" round /> },
  { name: "Illustrator", running: "one", icon: <Tile mark="Ai" tone="border-[#dc8620] bg-[#2b1505] text-[#f59323]" /> },
  { name: "InDesign", running: "many", icon: <Tile mark="Id" tone="border-[#e03a87] bg-[#2c0512] text-[#f8418f]" /> },
  { name: "Photoshop", running: "many", icon: <Tile mark="Ps" tone="border-[#1eb6e6] bg-[#041c26] text-[#26c9ff]" /> },
  {
    name: "Acrobat",
    running: "one",
    icon: (
      <span className="flex size-7 items-center justify-center border-2 border-[#d0281c] bg-[#2a0e0c] text-white shadow-sm">
        <Icon size="size-5">
          <Line d="M10 3c3-2 3 5 1 9-2 4-5 9-7 8-2-2 5-6 9-7s8 0 7 2c-2 2-8-4-9-8-.6-2-.5-3.500-1-4z" w={1.3} />
        </Icon>
      </span>
    ),
  },
  { name: "Audition", icon: <Tile mark="Au" tone="border-[#12c4a2] bg-[#04261f] text-[#14d8b0]" /> },
  { name: "After Effects", icon: <Tile mark="Ae" tone="border-[#a583dc] bg-[#1f0740] text-[#cf9bff]" /> },
  {
    name: "Media Encoder",
    icon: (
      <span className="flex size-7 items-center justify-center border-2 border-[#8e86e8] bg-[#120a48] text-[#a29bff] shadow-sm">
        <Icon size="size-5">
          <path d="M2 2l20 20H2z" />
          <path d="M6 3h3v3H6zM12 3h2v2h-2zM10 7h3v3h-3zM16 6h2v2h-2zM14 11h3v3h-3zM19 10h2v2h-2zM18 15h3v3h-3z" opacity=".6" />
        </Icon>
      </span>
    ),
  },
  { name: "Dreamweaver", icon: <Tile mark="Dw" tone="border-[#62d820] bg-[#12330b] text-[#77f51f]" /> },
  {
    name: "FileZilla",
    icon: (
      <svg viewBox="0 0 30 30" className="size-[30px]" aria-hidden="true">
        <path d="M1 1h28v28H1z" fill="#b00a0a" stroke="#8b0505" strokeWidth="1.500" strokeDasharray="2 1" />
        <text x="4" y="19" fontSize="17" fontWeight="800" fontStyle="italic" fill="#fff">F</text>
        <text x="13" y="25" fontSize="17" fontWeight="800" fontStyle="italic" fill="#fff">z</text>
      </svg>
    ),
  },
  { name: "Dimension", icon: <Tile mark="Dn" tone="rounded-[4px] border-[#4ec79a] bg-[#04261b] text-[#e6fff4]" /> },
  {
    name: "Creative Cloud",
    icon: (
      <span className="flex size-7 items-center justify-center bg-[#d3131b] text-white">
        <Icon size="size-[22px]">
          <path d="M8 19.500a6 6 0 0 1-2-11.600A8.300 8.300 0 1 1 15 19.500z" fill="none" stroke="currentColor" strokeWidth="1.500" />
          <Line d="M13 15.500l-2-2.200a3 3 0 1 0-3 3.200h7a4.800 4.800 0 1 0-4.500-6.500M9 6.800c3-.5 5 1 6 2.700l3 4" w={1.3} />
        </Icon>
      </span>
    ),
  },
  {
    name: "Calculator",
    icon: (
      <svg viewBox="0 0 22 30" className="h-[30px] w-[22px]" aria-hidden="true">
        <path d="M0 0h22v30H0z" fill="#3d484c" />
        <path d="M2 2h18v5H2z" fill="#fff" />
        <path d="M2 10h4l-4 3zM9 10h4l-4 3zM16 10h4l-4 3zM2 17h4l-4 3zM9 17h4l-4 3zM16 17h4l-4 3zM2 24h4l-4 3zM9 24h4l-4 3zM16 24h4l-4 3z" fill="#fff" />
      </svg>
    ),
  },
  {
    name: "Firefox",
    running: "one",
    icon: (
      <svg viewBox="0 0 28 28" className="size-7" aria-hidden="true">
        <defs>
          <linearGradient id="fox" x1="1" y1="0" x2="0" y2="1">
            <stop offset="0" stopColor="#fff44f" />
            <stop offset=".45" stopColor="#ff9a1a" />
            <stop offset="1" stopColor="#f5156c" />
          </linearGradient>
        </defs>
        <circle cx="14" cy="13.500" r="10" fill="#1763d8" />
        <path
          d="M4 2c0 3 .5 4 3 5 3-.5 5 .5 6 2-3 0-4.500 1-3 3l4 .5c-.5 2-2.500 2.500-3 4 1 3 6 3 8 0 3-4 1-9-2-11V0c2 1 3 2.500 4 4.500L22 3c4 3 6 7 6 12 0 7-6 13-14 13S0 22 0 14C0 9 2 5 4 2z"
          fill="url(#fox)"
        />
      </svg>
    ),
  },
  {
    name: "Chrome",
    running: "one",
    icon: (
      <svg viewBox="0 0 30 30" className="size-[30px]" aria-hidden="true">
        <circle cx="13" cy="14" r="13" fill="#f5c33b" />
        <path d="M13 14L1.700 7.500A13 13 0 0 1 24.500 8H13z" fill="#df4b3c" />
        <path d="M1.700 7.500A13 13 0 0 0 12 27l4-8-9-2z" fill="#2f9e57" />
        <circle cx="13" cy="14" r="6" fill="#fff" />
        <circle cx="13" cy="14" r="4.800" fill="#4a86e8" />
        <circle cx="21" cy="21" r="9" fill="#151011" />
        <path d="M16 22c0-3 2-6 6-6l3 7z" fill="#b0352a" />
        <path d="M15 25h12" stroke="#5c1c18" />
      </svg>
    ),
  },
  {
    name: "VLC",
    icon: (
      <svg viewBox="0 0 26 30" className="h-[30px] w-[26px]" aria-hidden="true">
        <path d="M4 20h18l4 9H0z" fill="#f28a12" />
        <path d="M11.500 1h3L21 23c-3 2.500-13 2.500-16 0z" fill="#f4f1ee" />
        <path d="M11.500 1h3l1.400 5h-5.800zM9 10.500h8l1.600 5.500H7.400z" fill="#f0841a" />
      </svg>
    ),
  },
  {
    name: "Control Panel",
    icon: (
      <svg viewBox="0 0 28 18" className="h-[18px] w-7" aria-hidden="true">
        <path d="M.5.5h27v17H.5z" fill="#7fcdf5" stroke="#1f86c8" />
        <circle cx="9" cy="7" r="4.500" fill="#fff" />
        <path d="M9 7V2.500A4.500 4.500 0 0 1 9 11.500z" fill="#2a8ed6" />
        <path d="M17 3.500h8M17 6.500h8M17 9.500h8M17 13.500h8" stroke="#1c74b4" />
        <path d="M5 14h9" stroke="#e6a020" strokeWidth="1.500" />
      </svg>
    ),
  },
  {
    name: "Notepad",
    icon: (
      <svg viewBox="0 0 28 28" className="size-7" aria-hidden="true">
        <path d="M22 3l6 20-8 4z" fill="#a98b5c" />
        <path d="M23 4l3 19-6 2z" fill="#f1efe6" />
        <path d="M9 2l14 1-5 23L0 21z" fill="#74b6c8" />
        <path d="M9 2l14 1-2 9-16-2z" fill="#a8d8e2" />
        <path d="M9 2h14" stroke="#555" strokeWidth="1.500" strokeDasharray="1.500 1" />
      </svg>
    ),
  },
  {
    name: "Cloud Sync",
    running: "one",
    icon: (
      <svg viewBox="-1 -1 32 26" className="h-[26px] w-8" aria-hidden="true">
        <path d="M10 3c3-4 7-4 10 0l8 10c4 6-1 10-5 9l-4-3c-1 5-7 5-8 0l-4 3c-4 1-9-3-5-9z" fill="#fff" stroke="#9aa" strokeWidth=".8" />
      </svg>
    ),
  },
  {
    name: "Sticky Notes",
    icon: (
      <svg viewBox="0 0 24 24" className="size-6" aria-hidden="true">
        <path d="M1 1h22v12H12v10H1z" fill="#3a3a3a" />
        <path d="M23 13v10H12z" fill="#3a3a3a" />
        <path d="M13 22V13h9z" fill="#fff" />
      </svg>
    ),
  },
  { name: "Outlook", running: "one", icon: <Office mark="O" shades={["#0d5fb0", "#1f8ade", "#32aaf0", "#1580d6"]} badge="#0f6cbd" /> },
  {
    name: "Cocktail",
    icon: (
      <svg viewBox="0 0 28 28" className="size-7" aria-hidden="true">
        <path d="M19 10L15 2l5 3 2-5 1 5 5-3-3 8z" fill="#3e7a2e" />
        <ellipse cx="21" cy="18" rx="6.500" ry="8" fill="#b57a20" />
        <path d="M16 13l9 9M15 18l6 7M20 11l7 8M26 13l-9 10M22 10l-7 8" stroke="#6f4510" strokeWidth=".8" />
        <path d="M1 9h12c0 6-2 9-5 9.500H6C3 18 1 15 1 9z" fill="#f0c8c0" />
        <path d="M2 12h10c-.5 4-2 6-4 6.500H6C4 18 2.500 16 2 12z" fill="#e0402c" />
        <path d="M8 8l6-4 2 2" stroke="#43b52f" strokeWidth="2" fill="none" />
        <path d="M3 2l4 9" stroke="#d8a0c0" />
        <circle cx="3" cy="4" r="2" fill="#e23aa0" />
        <path d="M6 18.500h2V25l3 2H3l3-2z" fill="#ddd0d8" />
      </svg>
    ),
  },
  {
    name: "Groove Music",
    running: "one",
    icon: (
      <svg viewBox="0 0 30 30" className="size-[30px]" fill="none" stroke="#33393c" aria-hidden="true">
        <path d="M22.500 3.500A13.500 13.500 0 1 0 28 11l-1.500-3.500L23 10" strokeWidth="2" />
        <circle cx="15" cy="15" r="3.500" strokeWidth="4" />
      </svg>
    ),
  },
];

function Taskbar() {
  return (
    <footer className="flex h-[50px] shrink-0 items-stretch bg-[#cbe1e6] text-[#111]">
      <button type="button" aria-label="Start" className="flex w-[60px] items-center justify-center">
        <Icon size="size-5" box="0 0 20 20">
          <path d="M0 2.800L8.200 1.700v7.800H0zM9 1.600L20 0v9.500H9zM0 10.300h8.200v7.900L0 17.100zM9 10.300h11V20L9 18.400z" />
        </Icon>
      </button>
      <button type="button" aria-label="Task View" className="flex w-[63px] items-center justify-center pr-1">
        <Icon size="size-5" box="0 0 20 20">
          <Line d="M.5 0v3.500h13V0M.5 20v-3.500h13V20M1.500 6.500h11v7h-11zM18.500 0v5M18.500 10v10" w={1.2} />
          <path d="M17 6h3v3h-3z" />
        </Icon>
      </button>
      {apps.map((app) => (
        <button key={app.name} type="button" aria-label={app.name} className="relative flex w-[62px] items-center justify-center">
          {app.icon}
          {app.running && (
            <span className="absolute inset-x-1.5 bottom-0 flex h-[3px] bg-[#2f7f95]">
              {app.running === "many" && <span className="ml-auto w-2.5 bg-[#84afbc]" />}
            </span>
          )}
        </button>
      ))}
      <div className="ml-auto flex items-center text-[14px] leading-5">
        <span>Bureau</span>
        <span className="ml-2.5 self-start pt-1 text-[#5f7fa8]">
          <Icon size="h-2 w-3" box="0 0 12 8"><Line d="M1 0l4 4-4 4M7 0l4 4-4 4" w={1.2} /></Icon>
        </span>
        <div className="ml-2.5 flex items-center gap-2">
          <Icon size="h-2.5 w-[17px]" box="0 0 17 10"><Line d="M.7 9.200L8.500 1.400l7.800 7.800" /></Icon>
          <svg viewBox="0 0 22 14" className="h-3.5 w-[22px]" aria-hidden="true">
            <path d="M5 13a4 4 0 0 1-.5-7.500C6 1 12-.5 15 4c4-.5 6 2 6 5s-2 4-4 4z" fill="#c9c9c9" />
            <path d="M1.500 9c0-2 1.500-3.300 3-3.500C6 1 12-.5 15 4c2.500-.3 4.500 1 5.500 2.500L10 7z" fill="#777" />
            <path d="M5 13a4 4 0 0 1-.5-7.500C6 1 12-.5 15 4c4-.5 6 2 6 5s-2 4-4 4z" fill="none" stroke="#333" strokeWidth="1.200" />
          </svg>
          <Icon size="h-[18px] w-[21px]" box="0 0 21 18"><Line d="M5 2.500h15v11H3V7M.8.8h4.400V5H.8zM3 5v3M10.500 13.500V17M6.500 16.500h8" w={1.2} /></Icon>
          <Icon size="h-[18px] w-[22px]" box="0 0 22 18">
            <Line d="M.8 6.500H3l4-4v13l-4-4H.8zM10.500 7c1.500 1.200 1.500 3 0 4.200M13.500 4.500c3 2.500 3 6.500 0 9M17 2c4.500 4 4.500 10 0 14" w={1.2} />
          </Icon>
          <span className="ml-1.5">
            <Icon size="size-[22px]">
              <Line d="M8 15L15 3c2-2 4 0 3 2L10 18l-4 2zM9 12c-5-1-8 3-7 7 2 5 9 1 11-4 1-3 3-5 5-5s1 3-1 4c3 2 6-1 5-4M15 6l3 2" w={1.3} />
            </Icon>
          </span>
          <span className="ml-2.5">FRA</span>
        </div>
        <div className="mr-5 ml-5 text-center leading-[23px]">
          <div>17:42</div>
          <div>16/09/2019</div>
        </div>
        <button type="button" aria-label="Notifications" className="ml-1 flex">
          <Icon size="h-5 w-[21px]" box="0 0 21 20"><Line d="M.7 1h19.600v15.500h-7L10.500 19l-2.800-2.500h-7z" w={1.3} /></Icon>
        </button>
        <div className="mr-[5px] ml-6 h-[50px] w-px bg-[#9fb4b9]" />
      </div>
    </footer>
  );
}

export default function App() {
  return (
    <div className="flex min-h-screen flex-col bg-[#262626] font-['Open_Sans','Noto_Sans',sans-serif]">
      <MenuBar />
      <OptionsBar />
      <main className="flex flex-1">
        <Toolbar />
        <div className="relative flex-1 bg-[#262626]">
          <LayersPanel />
        </div>
        <Dock />
      </main>
      <Taskbar />
    </div>
  );
}
